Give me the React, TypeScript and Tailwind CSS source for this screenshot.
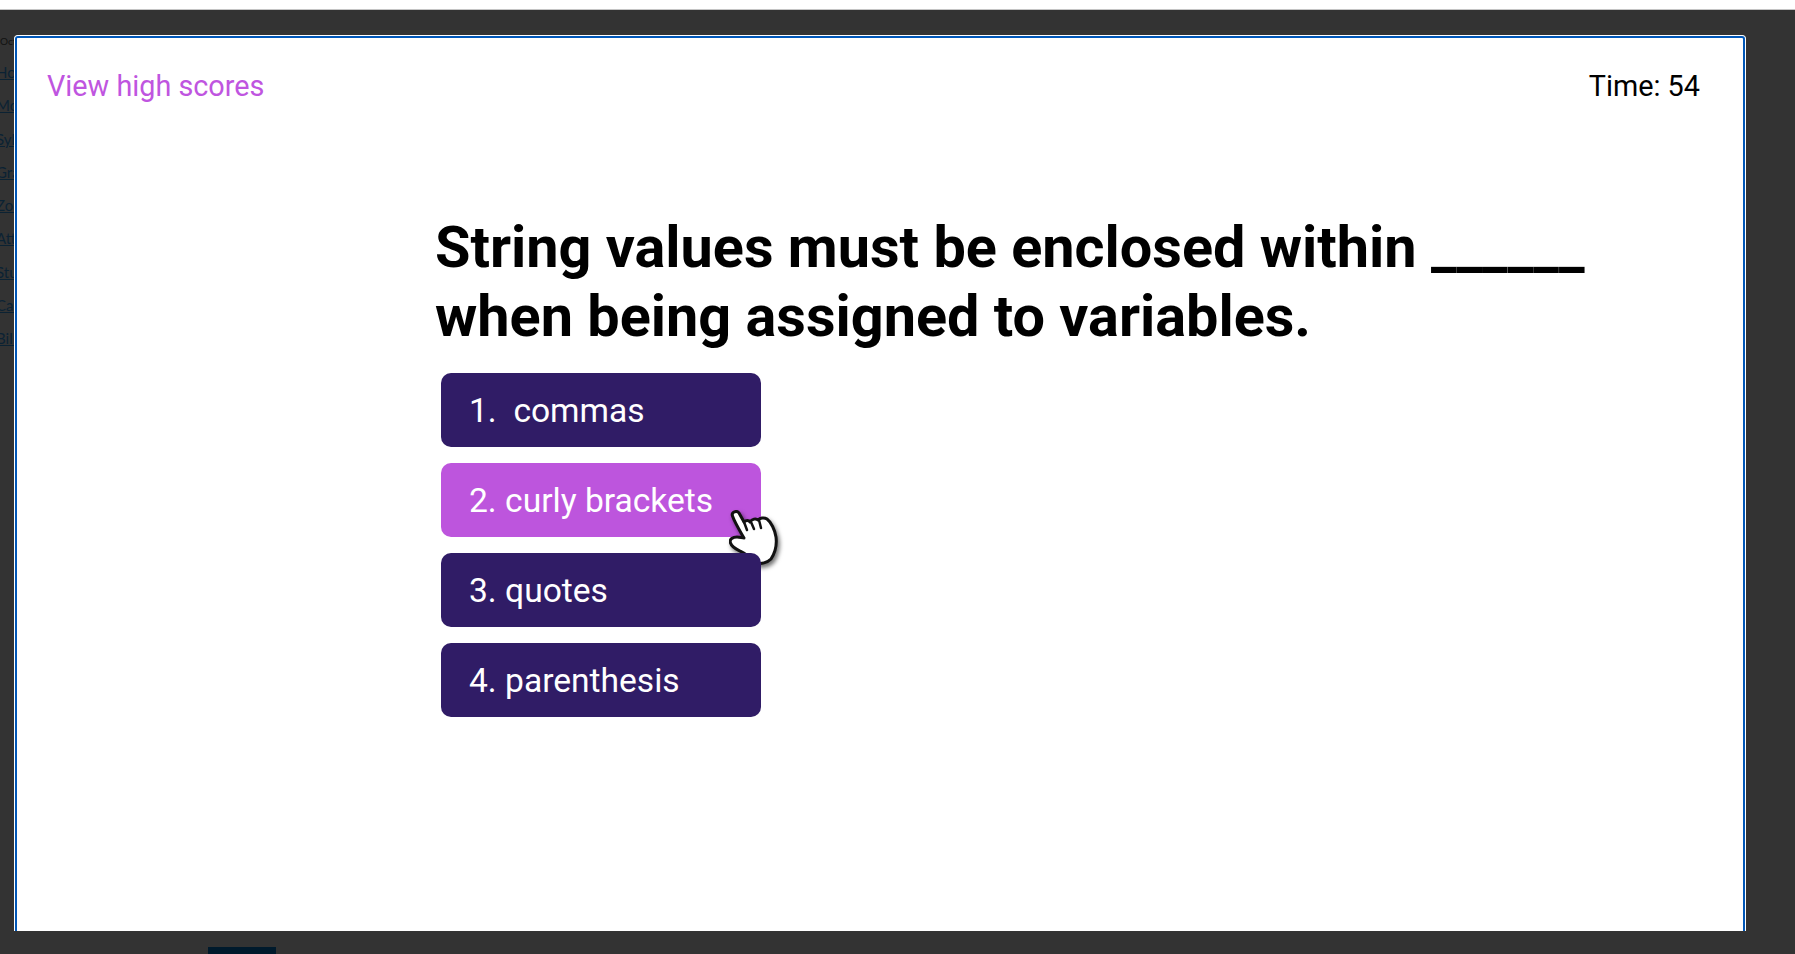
const sideLinks = ["Home", "Modules", "Syllabus", "Grades", "Zoom", "Attendance", "Students", "Canvas", "Billing"]

const answers = [
    { label: "1.\u00a0 commas", active: false },
    { label: "2. curly brackets", active: true },
    { label: "3. quotes", active: false },
    { label: "4. parenthesis", active: false },
]

// hand cursor from the recording, sits on the hovered answer
function HandCursor() {
    return (
        <svg
            viewBox="0 0 50 56"
            className="absolute left-[288px] top-[47px] h-[56px] w-[50px] drop-shadow-[2px_3px_2px_rgba(0,0,0,0.55)]"
        >
            <path
                d="M3.5 6C2 2 8 0 10 3L15 12C17 10 20 10 21 12C23 9 27 8 29 10C31 8 35 7 38 9C42 12 46 20 47 27C48 35 46 43 42 49C38 53 32 54 28 53C23 50 19 45 13 42C9 40 3 38 1.5 33C0 29 4 27 8 27C11 27 13 28 15 28C11 21 6 13 3.5 6Z"
                fill="#fff"
                stroke="#111"
                strokeWidth="3"
                strokeLinejoin="round"
            />
            <path d="M15 12L18 20M22 12L25 19M30 10L32 18" fill="none" stroke="#111" strokeWidth="2.5" strokeLinecap="round" />
        </svg>
    )
}

export default function App() {
    return (
        <div className="flex h-screen flex-col overflow-hidden bg-[#333333] font-['Roboto',sans-serif]">
            <div className="h-[10px] shrink-0 border-b border-[#c4c4c4] bg-white" />

            <div className="flex min-h-0 flex-1 pt-[25px]">
                {/* Page behind the modal, only a sliver shows */}
                <div className="w-[14px] shrink-0 overflow-hidden font-['Lato',sans-serif] whitespace-nowrap">
                    <div className="h-[12px] text-[10px] leading-[12px] text-[#111]">October</div>
                    <ul className="mt-[14px] -ml-[4px] flex flex-col">
                        {sideLinks.map((link) => (
                            <li key={link} className="h-[33.3px] text-[15px] leading-[22px] text-[#0b2233] underline">
                                {link}
                            </li>
                        ))}
                    </ul>
                </div>

                {/* Quiz modal */}
                <div className="w-[1732px] shrink-0 rounded-t-[4px] border border-b-0 border-white bg-white">
                    <div className="h-full rounded-t-[3px] border-2 border-b-0 border-[#0057b8]">
                        <header className="flex items-center justify-between pt-[28px] pr-[43px] pl-[30px] text-[28.8px] leading-[40px]">
                            <a className="text-[#bf55e0]">View high scores</a>
                            <span className="text-black">Time: 54</span>
                        </header>

                        <main className="mt-[107px] ml-[418px] w-[1250px]">
                            <h1 className="text-[57.6px] leading-[69px] font-bold text-black">
                                String values must be enclosed within ______
                                <br />
                                when being assigned to variables.
                            </h1>
                            <div className="mt-[22px] ml-[6px] flex flex-col gap-[16px]">
                                {answers.map((answer) => (
                                    <button
                                        key={answer.label}
                                        className={`relative h-[74px] w-[320px] rounded-[10px] pt-[2px] pl-[28px] text-left text-[33.6px] text-white ${
                                            answer.active ? "bg-[#bd55dd]" : "bg-[#301c66]"
                                        }`}
                                    >
                                        {answer.label}
                                        {answer.active && <HandCursor />}
                                    </button>
                                ))}
                            </div>
                        </main>
                    </div>
                </div>
            </div>

            <div className="h-[23px] shrink-0 pt-[16px] pl-[208px]">
                <div className="h-[7px] w-[68px] bg-[#001a2c]" />
            </div>
        </div>
    )
}
